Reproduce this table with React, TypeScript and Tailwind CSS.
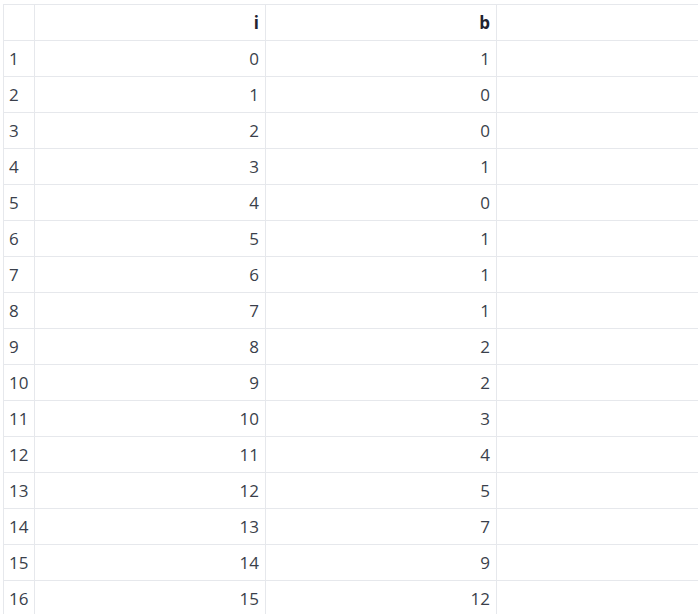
import React from 'react'

const rows = [
  [0, 1], [1, 0], [2, 0], [3, 1], [4, 0], [5, 1], [6, 1], [7, 1],
  [8, 2], [9, 2], [10, 3], [11, 4], [12, 5], [13, 7], [14, 9], [15, 12],
]

export default function App() {
  return (
    <div className="w-[698px] h-[614px] overflow-hidden bg-white pt-1 pl-[3px]">
      <table
        className="table-fixed w-[725px] border-collapse text-[17px] text-[#3a3f4b]"
        style={{ fontFamily: '"Open Sans", "Noto Sans", sans-serif' }}
      >
        <colgroup>
          <col className="w-[31px]" />
          <col className="w-[231px]" />
          <col className="w-[231px]" />
          <col className="w-[232px]" />
        </colgroup>
        <thead>
          <tr className="h-[36px]">
            <th className="border border-[#e6e8ec]"></th>
            <th className="border border-[#e6e8ec] px-[6px] text-right font-bold text-[#1f2430]">i</th>
            <th className="border border-[#e6e8ec] px-[6px] text-right font-bold text-[#1f2430]">b</th>
            <th className="border border-[#e6e8ec]"></th>
          </tr>
        </thead>
        <tbody>
          {rows.map(([i, b], idx) => (
            <tr key={idx} className="h-[36px]">
              <td className="border border-[#e6e8ec] pl-[5px] text-left">{idx + 1}</td>
              <td className="border border-[#e6e8ec] px-[6px] text-right">{i}</td>
              <td className="border border-[#e6e8ec] px-[6px] text-right">{b}</td>
              <td className="border border-[#e6e8ec]"></td>
            </tr>
          ))}
        </tbody>
      </table>
    </div>
  )
}
